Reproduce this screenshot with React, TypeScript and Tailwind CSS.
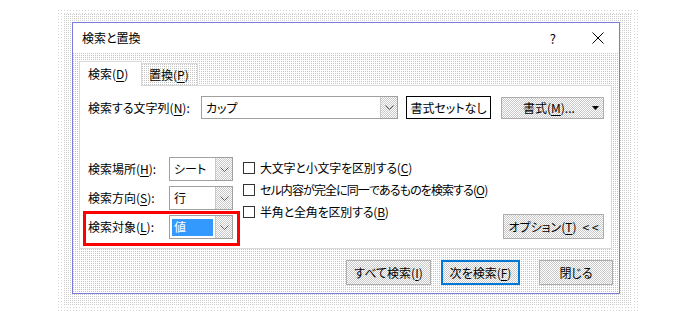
import type { ReactNode } from 'react';

const font = "font-['Noto_Sans_CJK_JP','Noto_Sans',sans-serif] [font-feature-settings:'palt']";
// GIF-style dither patterns
const dots = 'bg-[conic-gradient(from_270deg_at_1px_1px,#c4c4c4_25%,#fff_0)] bg-[length:2px_2px]';
const shadowNear = 'bg-[conic-gradient(from_270deg_at_1px_1px,#cdcdcd_25%,#fff_0)] bg-[length:2px_2px]';
const shadowFar = 'bg-[conic-gradient(from_270deg_at_1px_1px,#d4d4d4_25%,#fff_0)] bg-[length:3px_3px]';
const checker = 'bg-[conic-gradient(#c8c8c8_25%,#fff_0_50%,#c8c8c8_0_75%,#fff_0)] bg-[length:2px_2px]';

function U({ children }: { children: ReactNode }) {
  return <span className="underline underline-offset-2">{children}</span>;
}

function Chevron() {
  return (
    <svg width="9" height="5" viewBox="0 0 9 5">
      <path d="M0.5 0.5 L4.5 4.5 L8.5 0.5" fill="none" stroke="#5a5a5a" strokeWidth="1" />
    </svg>
  );
}

function Combo({ className, children }: { className: string; children?: ReactNode }) {
  return (
    <div className={`flex shrink-0 border border-[#a0a0a0] bg-white ${className}`}>
      <div className="flex flex-1 items-center px-[2px]">{children}</div>
      <div className={`flex w-[17px] items-center justify-center border-l border-[#c8c8c8] ${checker}`}>
        <Chevron />
      </div>
    </div>
  );
}

function Button({ className, children }: { className: string; children: ReactNode }) {
  return (
    <div className={`flex shrink-0 items-center justify-center border border-[#adadad] ${checker} ${className}`}>
      {children}
    </div>
  );
}

function Check({ children, tight }: { children: ReactNode; tight?: boolean }) {
  return (
    <div className="flex h-[22px] items-center gap-[5px]">
      <div className="h-[12px] w-[12px] shrink-0 border border-[#333] bg-white" />
      <span className={tight ? 'tracking-[-0.9px]' : 'tracking-[-0.2px]'}>{children}</span>
    </div>
  );
}

export default function App() {
  return (
    <div
      className={`h-[317px] w-[698px] whitespace-nowrap bg-white pl-[58px] pt-[10px] text-[12px] leading-none text-black ${font}`}
    >
      {/* dithered drop shadow */}
      <div className={`inline-block pb-[8px] pl-[6px] pr-[8px] pt-[4px] ${shadowFar}`}>
        <div className={`pb-[11px] pl-[8px] pr-[12px] pt-[8px] ${shadowNear}`}>
          <div className="flex w-[548px] flex-col border border-[#7b7bdc] bg-white">
            {/* Title bar */}
            <div className="flex h-[30px] items-center bg-white pl-[9px] pr-[15px]">
              <span className="text-[12px]">検索と置換</span>
              <span className="ml-auto mr-[36px] text-[13px]">?</span>
              <svg width="12" height="12" viewBox="0 0 12 12">
                <path d="M0.5 0.5 L11.5 11.5 M11.5 0.5 L0.5 11.5" stroke="#000" strokeWidth="1" />
              </svg>
            </div>

            {/* Body */}
            <div className={`flex flex-col pb-[8px] pl-[6px] pr-[7px] pt-[8px] ${dots}`}>
              {/* Tabs */}
              <div className="flex h-[24px] items-end">
                <div className="relative z-10 -mb-px flex h-[25px] w-[63px] items-center border border-b-0 border-[#d9d9d9] bg-white pl-[8px]">
                  検索(<U>D</U>)
                </div>
                <div className={`-ml-px flex h-[22px] w-[57px] items-center border border-b-0 border-[#d9d9d9] pl-[7px] ${dots}`}>
                  置換(<U>P</U>)
                </div>
              </div>

              {/* Panel */}
              <div className="flex h-[164px] flex-col border border-[#d9d9d9] bg-white pl-[8px] pr-[7px] pt-[10px]">
                <div className="flex h-[23px] items-center">
                  <span className="w-[113px] shrink-0">
                    検索する文字列(<U>N</U>):
                  </span>
                  <Combo className="h-[23px] w-[197px]">
                    <span className="pl-[2px]">カップ</span>
                  </Combo>
                  <div className="ml-[8px] flex h-[23px] w-[85px] shrink-0 items-center justify-center border border-black bg-white">
                    書式セットなし
                  </div>
                  <Button className="ml-[10px] h-[22px] w-[103px] !justify-start pl-[21px] pr-[4px]">
                    <span>
                      書式(<U>M</U>)...
                    </span>
                    <svg className="ml-auto" width="7" height="4" viewBox="0 0 7 4">
                      <path d="M0 0 H7 L3.5 4 Z" fill="#000" />
                    </svg>
                  </Button>
                </div>

                <div className="mt-[38px] flex">
                  <div className="flex shrink-0 flex-col gap-[5px]">
                    <div className="flex h-[24px] items-center">
                      <span className="w-[81px]">
                        検索場所(<U>H</U>):
                      </span>
                      <Combo className="h-[24px] w-[64px]">
                        <span className="pl-[2px]">シート</span>
                      </Combo>
                    </div>
                    <div className="flex h-[24px] items-center">
                      <span className="w-[81px]">
                        検索方向(<U>S</U>):
                      </span>
                      <Combo className="h-[24px] w-[64px]">
                        <span className="pl-[2px]">行</span>
                      </Combo>
                    </div>
                    <div className="-mb-[7px] -ml-[5px] -mr-[7px] -mt-[4px] border-[3px] border-[#ff0000] pb-[4px] pl-[2px] pr-[4px] pt-[1px]">
                      <div className="flex h-[24px] items-center">
                        <span className="w-[81px]">
                          検索対象(<U>L</U>):
                        </span>
                        <Combo className="h-[24px] w-[64px]">
                          <span className="flex h-[17px] flex-1 items-center bg-[#3399ff] pl-[2px] text-white">値</span>
                        </Combo>
                      </div>
                    </div>
                  </div>

                  <div className="ml-[10px] flex w-[250px] shrink-0 flex-col">
                    <Check>
                      大文字と小文字を区別する(<U>C</U>)
                    </Check>
                    <Check tight>
                      セル内容が完全に同一であるものを検索する(<U>O</U>)
                    </Check>
                    <Check>
                      半角と全角を区別する(<U>B</U>)
                    </Check>
                  </div>

                  <Button className="ml-auto h-[25px] w-[101px] gap-[6px] self-end">
                    <span>
                      オプション(<U>T</U>)
                    </span>
                    <span>&lt; &lt;</span>
                  </Button>
                </div>
              </div>

              {/* Footer buttons */}
              <div className="-mr-px mt-[11px] flex justify-end">
                <Button className="h-[25px] w-[85px]">
                  すべて検索(<U>I</U>)
                </Button>
                <div className={`ml-[10px] flex h-[25px] w-[79px] items-center justify-center border-2 border-[#0078d7] ${checker}`}>
                  次を検索(<U>F</U>)
                </div>
                <Button className="ml-[19px] h-[25px] w-[74px]">閉じる</Button>
              </div>
            </div>
          </div>
        </div>
      </div>
    </div>
  );
}
